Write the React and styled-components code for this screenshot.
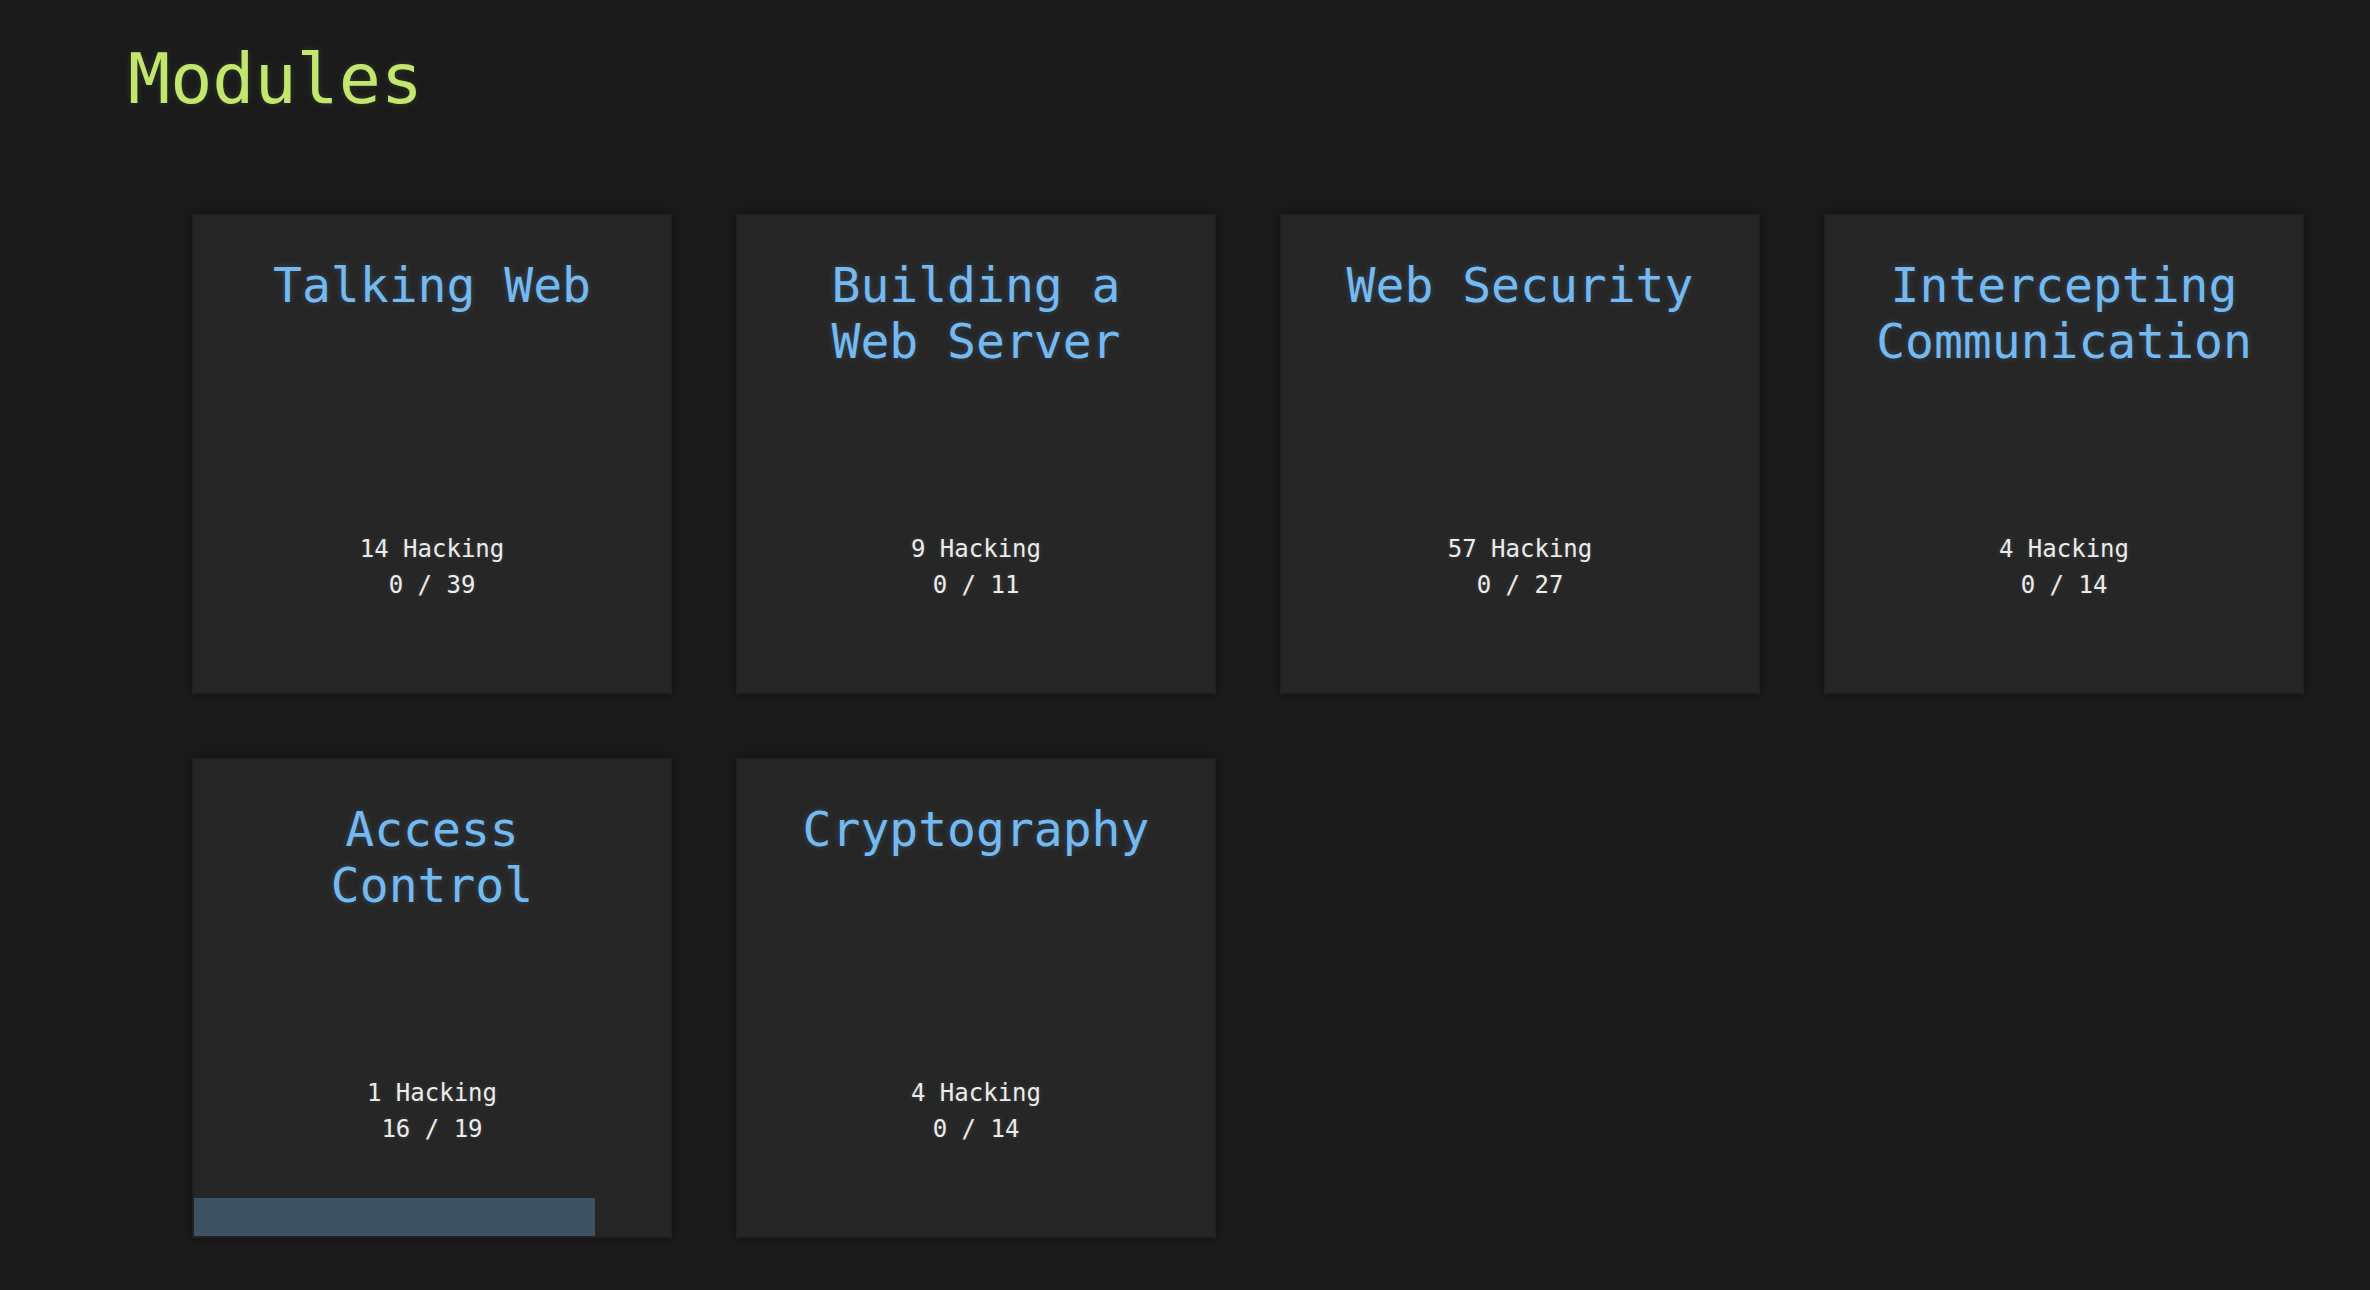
import React from 'react';
import styled, { createGlobalStyle } from 'styled-components';

const GlobalStyle = createGlobalStyle`
  html, body {
    margin: 0;
    padding: 0;
    background: #1b1b1b;
    font-family: "DejaVu Sans Mono", "Liberation Mono", monospace;
  }
`;

const Page = styled.main`
  min-height: 1290px;
  box-sizing: border-box;
  padding: 38px 0 0 128px;
  background: #1b1b1b;
`;

const Heading = styled.h1`
  margin: 0;
  font-size: 70px;
  line-height: 82px;
  font-weight: normal;
  color: #c2e66e;
  text-shadow: 0 0 6px rgba(194, 230, 110, 0.15);
`;

const Grid = styled.section`
  display: grid;
  grid-template-columns: repeat(4, 480px);
  gap: 64px 64px;
  margin: 94px 0 0 64px;
`;

const Card = styled.article`
  box-sizing: border-box;
  height: 480px;
  display: flex;
  flex-direction: column;
  background: #262626;
  border: 2px solid #222;
  box-shadow: 0 0 12px rgba(0, 0, 0, 0.45);
`;

const Title = styled.h2`
  box-sizing: border-box;
  height: 315px;
  margin: 0;
  padding: 41px 40px 0;
  font-size: 48px;
  font-weight: normal;
  text-align: center;
  color: #74b9f0;
  text-shadow: 0 0 6px rgba(116, 185, 240, 0.25);
`;

const Stats = styled.div`
  font-size: 24px;
  line-height: 36px;
  text-align: center;
  color: #ececec;
  text-shadow: 0 0 4px rgba(255, 255, 255, 0.15);
`;

const Progress = styled.div`
  margin-top: auto;
  height: 38px;
  background: #3f5263;
`;

const modules = [
  { name: 'Talking Web', hacking: 14, solved: 0, total: 39 },
  { name: 'Building a Web Server', hacking: 9, solved: 0, total: 11 },
  { name: 'Web Security', hacking: 57, solved: 0, total: 27 },
  { name: 'Intercepting Communication', hacking: 4, solved: 0, total: 14 },
  { name: 'Access Control', hacking: 1, solved: 16, total: 19 },
  { name: 'Cryptography', hacking: 4, solved: 0, total: 14 },
];

const ModuleCard = ({ mod }) => {
  const pct = (mod.solved / mod.total) * 100;
  return (
    <Card>
      <Title>{mod.name}</Title>
      <Stats>
        <div>{mod.hacking} Hacking</div>
        <div>{mod.solved} / {mod.total}</div>
      </Stats>
      {mod.solved > 0 && <Progress style={{ width: `${pct}%` }} />}
    </Card>
  );
};

export default function App() {
  return (
    <>
      <GlobalStyle />
      <Page>
        <Heading>Modules</Heading>
        <Grid>
          {modules.map((m) => <ModuleCard key={m.name} mod={m} />)}
        </Grid>
      </Page>
    </>
  );
}
